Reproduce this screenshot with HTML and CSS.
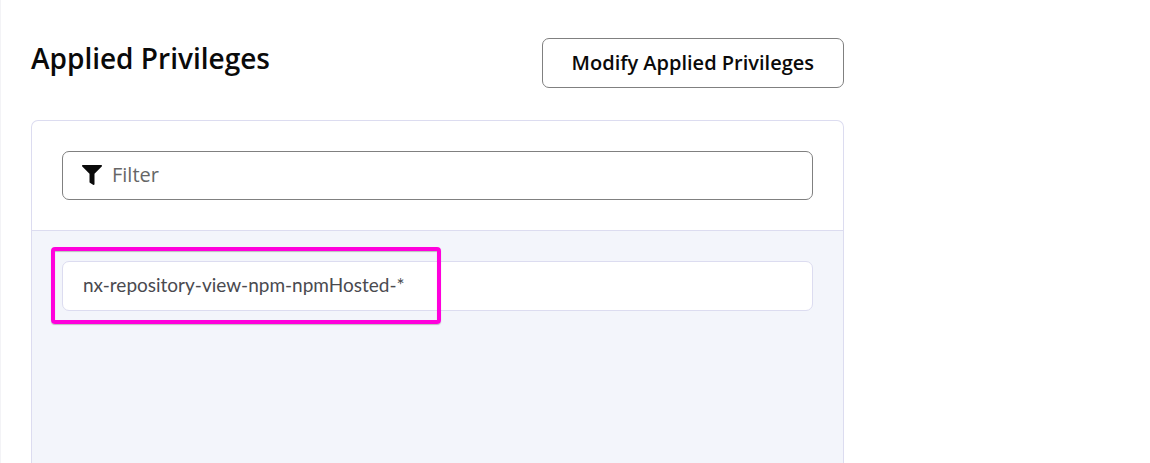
FILE: index.html
```html
<!DOCTYPE html>
<html lang="en">
<head>
<meta charset="utf-8">
<title>Applied Privileges</title>
<link rel="stylesheet" href="styles.css">
</head>
<body>
<main class="page">
  <section class="privileges">
    <header class="section-header">
      <h2 class="section-title">Applied Privileges</h2>
      <button class="button" type="button">Modify Applied Privileges</button>
    </header>
    <div class="panel">
      <div class="panel-filter">
        <label class="filter">
          <svg class="filter-icon" viewBox="0 0 512 512" aria-hidden="true"><path d="M488 0H24C3 0-8 26 7 41l185 185v206c0 8 4 15 10 20l80 56c16 11 38 0 38-20V226L505 41c15-15 4-41-17-41z"/></svg>
          <input class="filter-input" type="text" placeholder="Filter" aria-label="Filter">
        </label>
      </div>
      <ul class="privilege-list">
        <li class="privilege"><span class="privilege-name">nx-repository-view-npm-npmHosted-*</span></li>
      </ul>
    </div>
  </section>
</main>
</body>
</html>
```
FILE: styles.css
```css
* {
  box-sizing: border-box;
}

body {
  margin: 0;
  background: #fff;
  color: #0a0a0a;
  font-family: "Open Sans", sans-serif;
  font-size: 20px;
}

.page {
  display: flex;
  min-height: 100vh;
  padding: 38px 30px 0;
  border-left: 1px solid #f3f3f6;
}

.privileges {
  display: flex;
  flex-direction: column;
  width: 100%;
  max-width: 813px;
}

.section-header {
  display: flex;
  align-items: flex-start;
  justify-content: space-between;
  gap: 20px;
  margin-bottom: 32px;
}

.section-title {
  margin: 0;
  font-size: 28px;
  font-weight: 600;
  line-height: 40px;
}

.button {
  padding: 9px 29px;
  border: 1px solid #808080;
  border-radius: 7px;
  background: #fff;
  color: inherit;
  font: 600 20px/30px "Open Sans", sans-serif;
}

.panel {
  display: flex;
  flex: 1;
  flex-direction: column;
  border: 1px solid #dcdcf0;
  border-bottom: 0;
  border-radius: 7px 7px 0 0;
}

.panel-filter {
  padding: 30px;
  border-bottom: 1px solid #dcdcf0;
}

.filter {
  display: flex;
  align-items: center;
  gap: 10px;
  padding: 0 19px;
  border: 1px solid #808080;
  border-radius: 7px;
}

.filter-icon {
  flex: none;
  width: 20px;
  height: 20px;
  margin-bottom: 2px;
  fill: #0a0a0a;
}

.filter-input {
  flex: 1;
  min-width: 0;
  height: 47px;
  padding: 0 0 2px;
  border: 0;
  outline: 0;
  background: transparent;
  color: inherit;
  font: 400 20px/30px "Open Sans", sans-serif;
}

.filter-input::placeholder {
  color: #666;
  opacity: 1;
}

.privilege-list {
  flex: 1;
  margin: 0;
  padding: 30px;
  background: #f3f5fb;
  list-style: none;
}

.privilege {
  padding: 8px 20px 10px;
  border: 1px solid #dcdcf0;
  border-radius: 7px;
  background: #fff;
  color: #4a4a4f;
  font: 400 19px/30px Lato, sans-serif;
}

.privilege-name {
  display: inline-block;
  position: relative;
}

.privilege-name::after {
  content: "";
  position: absolute;
  inset: -23px -36px -24px -32px;
  border: 4px solid #ff00dc;
  border-radius: 4px;
  box-shadow: 0 1px 1px #8888, inset 0 1px 1px #8888;
}
```
